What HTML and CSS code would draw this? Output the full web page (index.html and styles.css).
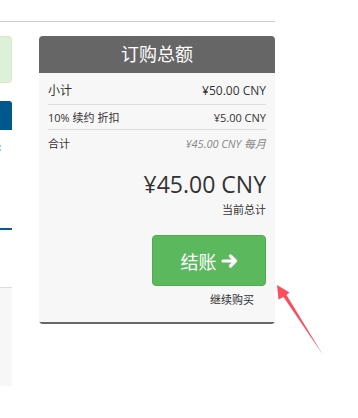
FILE: index.html
```html
<!DOCTYPE html>
<html lang="zh-CN">
<head>
<meta charset="utf-8">
<title>订购总额</title>
<link rel="stylesheet" href="styles.css">
</head>
<body>
<div class="page">
  <div class="rule"></div>
  <div class="layout">
    <div class="main-col">
      <div class="alert"></div>
      <div class="btn-blue"></div>
      <div class="dots"></div>
      <div class="tab-line"></div>
      <div class="gray-box"></div>
    </div>
    <aside class="summary">
      <div class="summary-head">订购总额</div>
      <div class="summary-body">
        <div class="line line-sub"><span>小计</span><span>¥50.00 CNY</span></div>
        <div class="line line-disc"><span>10% 续约 折扣</span><span>¥5.00 CNY</span></div>
        <div class="line line-last"><span>合计</span><span class="recurring">¥45.00 CNY 每月</span></div>
        <div class="total">¥45.00 CNY</div>
        <div class="total-label">当前总计</div>
        <div class="actions">
          <a class="checkout" href="#">结账
            <svg class="arrow-icon" width="17" height="14" viewBox="0 0 17 14" aria-hidden="true">
              <path d="M2 7 H14.5 M9.5 2 L14.5 7 L9.5 12" fill="none" stroke="#fff" stroke-width="3.2" stroke-linecap="round" stroke-linejoin="round"/>
            </svg>
          </a>
        </div>
        <div class="continue">继续购买</div>
      </div>
    </aside>
  </div>
</div>
<svg class="annotation" width="358" height="418" viewBox="0 0 358 418" aria-hidden="true">
  <polygon points="277,285 289.5,292.5 286.5,295 323,355 283.5,297 278.5,299.5" fill="#fc4d5e"/>
</svg>
</body>
</html>
```

FILE: styles.css
```css
html, body {
  margin: 0;
  padding: 0;
  background: #fff;
}

body {
  font-family: "Open Sans", "Noto Sans CJK SC", sans-serif;
  color: #333;
  position: relative;
  width: 358px;
  height: 418px;
  overflow: hidden;
}

.page {
  width: 275px;
}

.rule {
  margin-top: 21px;
  border-top: 1px solid #cfcfcf;
}

.layout {
  display: flex;
  gap: 27px;
  margin-top: 14px;
  align-items: flex-start;
}

.main-col {
  width: 12px;
  display: flex;
  flex-direction: column;
}

.alert {
  box-sizing: border-box;
  height: 47px;
  background: #dff0d8;
  border: 1px solid #d6e9c6;
  border-left: none;
  border-radius: 0 4px 4px 0;
}

.btn-blue {
  margin-top: 18px;
  height: 29px;
  background: #00588c;
  border-radius: 0 3px 0 0;
}

.dots {
  margin-top: 15px;
  width: 1px;
  height: 8px;
  background: repeating-linear-gradient(to bottom, #8fd0f2 0 2px, transparent 2px 4px);
}

.tab-line {
  margin-top: 75px;
  height: 2px;
  background: #0b5a8c;
}

.gray-box {
  margin-top: 57px;
  height: 98px;
  background: #f7f7f7;
  border-top: 1px solid #dcdcdc;
}

.summary {
  width: 236px;
  border-radius: 4px;
  overflow: hidden;
}

.summary-head {
  height: 37px;
  line-height: 37px;
  background: #666;
  color: #fff;
  text-align: center;
  font-size: 18px;
}

.summary-body {
  background: #f7f7f7;
  padding: 3px 9px 14px;
  border-bottom: 2px solid #666;
}

.line {
  display: flex;
  justify-content: space-between;
  align-items: center;
  font-size: 11px;
}

.line-sub {
  height: 28px;
  font-size: 12px;
  border-bottom: 1px solid #ddd;
}

.line-disc {
  height: 24px;
  border-bottom: 1px solid #ddd;
}

.line-last {
  height: 26px;
}

.recurring {
  color: #888;
  font-style: italic;
}

.total {
  margin-top: 13px;
  line-height: 30px;
  font-size: 23px;
  text-align: right;
}

.total-label {
  margin-top: 3px;
  line-height: 16px;
  font-size: 11px;
  text-align: right;
}

.actions {
  margin-top: 17px;
  display: flex;
  justify-content: flex-end;
}

.checkout {
  box-sizing: border-box;
  width: 114px;
  height: 51px;
  display: flex;
  align-items: center;
  justify-content: center;
  gap: 4px;
  background: #5cb85c;
  border: 1px solid #4cae4c;
  border-radius: 4px;
  color: #fff;
  font-size: 18px;
  text-decoration: none;
}

.arrow-icon {
  display: block;
}

.continue {
  margin-top: 6px;
  margin-right: 12px;
  line-height: 16px;
  font-size: 11px;
  text-align: right;
}

.annotation {
  position: absolute;
  top: 0;
  left: 0;
  pointer-events: none;
}
```
